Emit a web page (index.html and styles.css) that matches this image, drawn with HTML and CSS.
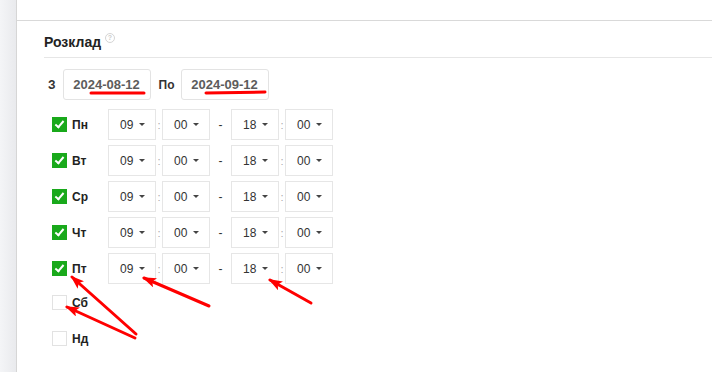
FILE: index.html
```html
<!DOCTYPE html>
<html>
<head>
    <title>Розклад</title>
    <link rel="stylesheet" href="styles.css">
</head>
<body>
    <div class="sidebar"></div>
    <div class="main">
        <div class="topbar"></div>
        <div class="section">
            <div class="section-title">Розклад <span class="help">?</span></div>

            <div class="dates">
                <span class="dates-label">З</span>
                <div class="date-box">2024-08-12</div>
                <span class="dates-label dates-to">По</span>
                <div class="date-box">2024-09-12</div>
            </div>

            <div class="days">
                <div class="day">
                    <span class="check checked"></span><span class="day-name">Пн</span>
                    <div class="sel"><span>09</span><i class="caret"></i></div><span class="colon">:</span>
                    <div class="sel"><span>00</span><i class="caret"></i></div><span class="dash">-</span>
                    <div class="sel"><span>18</span><i class="caret"></i></div><span class="colon">:</span>
                    <div class="sel"><span>00</span><i class="caret"></i></div>
                </div>
                <div class="day">
                    <span class="check checked"></span><span class="day-name">Вт</span>
                    <div class="sel"><span>09</span><i class="caret"></i></div><span class="colon">:</span>
                    <div class="sel"><span>00</span><i class="caret"></i></div><span class="dash">-</span>
                    <div class="sel"><span>18</span><i class="caret"></i></div><span class="colon">:</span>
                    <div class="sel"><span>00</span><i class="caret"></i></div>
                </div>
                <div class="day">
                    <span class="check checked"></span><span class="day-name">Ср</span>
                    <div class="sel"><span>09</span><i class="caret"></i></div><span class="colon">:</span>
                    <div class="sel"><span>00</span><i class="caret"></i></div><span class="dash">-</span>
                    <div class="sel"><span>18</span><i class="caret"></i></div><span class="colon">:</span>
                    <div class="sel"><span>00</span><i class="caret"></i></div>
                </div>
                <div class="day">
                    <span class="check checked"></span><span class="day-name">Чт</span>
                    <div class="sel"><span>09</span><i class="caret"></i></div><span class="colon">:</span>
                    <div class="sel"><span>00</span><i class="caret"></i></div><span class="dash">-</span>
                    <div class="sel"><span>18</span><i class="caret"></i></div><span class="colon">:</span>
                    <div class="sel"><span>00</span><i class="caret"></i></div>
                </div>
                <div class="day">
                    <span class="check checked"></span><span class="day-name">Пт</span>
                    <div class="sel"><span>09</span><i class="caret"></i></div><span class="colon">:</span>
                    <div class="sel"><span>00</span><i class="caret"></i></div><span class="dash">-</span>
                    <div class="sel"><span>18</span><i class="caret"></i></div><span class="colon">:</span>
                    <div class="sel"><span>00</span><i class="caret"></i></div>
                </div>
                <div class="day off">
                    <span class="check"></span><span class="day-name">Сб</span>
                </div>
                <div class="day off">
                    <span class="check"></span><span class="day-name">Нд</span>
                </div>
            </div>
        </div>
    </div>

    <!-- red annotation marks drawn over the screenshot -->
    <svg class="marks" width="712" height="372" viewBox="0 0 712 372">
        <defs>
            <marker id="head" markerWidth="14" markerHeight="10" refX="12" refY="5" orient="auto" markerUnits="userSpaceOnUse">
                <path d="M0,0 L14,5 L0,10 L3,5 Z" fill="#f00"/>
            </marker>
        </defs>
        <line x1="91" y1="93" x2="144" y2="93" stroke="#f00" stroke-width="3" stroke-linecap="round"/>
        <line x1="206" y1="93" x2="265" y2="92" stroke="#f00" stroke-width="3" stroke-linecap="round"/>
        <line x1="136" y1="334" x2="72" y2="277" stroke="#f00" stroke-width="3" stroke-linecap="round" marker-end="url(#head)"/>
        <line x1="135" y1="338" x2="67" y2="307" stroke="#f00" stroke-width="3" stroke-linecap="round" marker-end="url(#head)"/>
        <line x1="209" y1="306" x2="144" y2="278" stroke="#f00" stroke-width="3" stroke-linecap="round" marker-end="url(#head)"/>
        <line x1="311" y1="303" x2="270" y2="280" stroke="#f00" stroke-width="3" stroke-linecap="round" marker-end="url(#head)"/>
    </svg>
</body>
</html>
```

FILE: styles.css
```css
body {
    margin: 0;
    height: 372px;
    display: flex;
    background-color: #fff;
    font-family: "Liberation Sans", Arial, sans-serif;
    color: #333;
    position: relative;
    overflow: hidden;
}
.sidebar {
    width: 16px;
    background: linear-gradient(to right, #f4f5f7, #e9eaed);
    border-right: 1px solid #d6d6d6;
}
.main {
    flex: 1;
}
.topbar {
    height: 20px;
    border-bottom: 1px solid #d9d9d9;
}
.section {
    padding-left: 27px;
}
.section-title {
    padding: 11px 0 5px;
    line-height: 20px;
    font-size: 14px;
    font-weight: bold;
    color: #222;
    border-bottom: 1px solid #e6e6e6;
}
.help {
    display: inline-block;
    width: 8px;
    height: 8px;
    border: 1px solid #d5d5d5;
    border-radius: 50%;
    color: #ccc;
    font-size: 7px;
    line-height: 8px;
    text-align: center;
    vertical-align: 7px;
    margin-left: 0;
}
.dates {
    display: flex;
    align-items: center;
    margin-top: 11px;
    padding-left: 4px;
    font-size: 12px;
    font-weight: bold;
}
.dates-label {
    margin-right: 7px;
}
.dates-to {
    margin-left: 8px;
    margin-right: 6px;
}
.date-box {
    box-sizing: border-box;
    width: 88px;
    height: 31px;
    line-height: 29px;
    border: 1px solid #e3e3e3;
    border-radius: 3px;
    text-align: center;
    font-size: 13px;
    color: #5c5c5c;
}
.days {
    margin-top: 9px;
    padding-left: 8px;
}
.day {
    display: flex;
    align-items: center;
    height: 31px;
    margin-bottom: 5px;
}
.day.off {
    height: 27px;
    margin-bottom: 9px;
}
.check {
    box-sizing: border-box;
    width: 15px;
    height: 15px;
    border: 1px solid #e2e2e2;
    margin-right: 5px;
    position: relative;
}
.check.checked {
    background-color: #19a91b;
    border-color: #19a91b;
}
.check.checked::after {
    content: "";
    position: absolute;
    left: 4px;
    top: 1px;
    width: 3px;
    height: 7px;
    border: solid #fff;
    border-width: 0 2px 2px 0;
    transform: rotate(40deg);
}
.day-name {
    width: 36px;
    font-size: 12px;
    font-weight: bold;
    color: #222;
}
.sel {
    box-sizing: border-box;
    width: 48px;
    height: 31px;
    border: 1px solid #e6e6e6;
    display: flex;
    align-items: center;
    justify-content: space-between;
    padding: 0 10px 0 11px;
    font-size: 12px;
    color: #333;
}
.caret {
    width: 0;
    height: 0;
    border-left: 3px solid transparent;
    border-right: 3px solid transparent;
    border-top: 3px solid #444;
}
.colon {
    width: 6px;
    text-align: center;
    font-size: 11px;
    color: #aaa;
}
.dash {
    width: 21px;
    text-align: center;
    font-size: 12px;
    color: #333;
}
.marks {
    position: absolute;
    top: 0;
    left: 0;
    pointer-events: none;
}
```
